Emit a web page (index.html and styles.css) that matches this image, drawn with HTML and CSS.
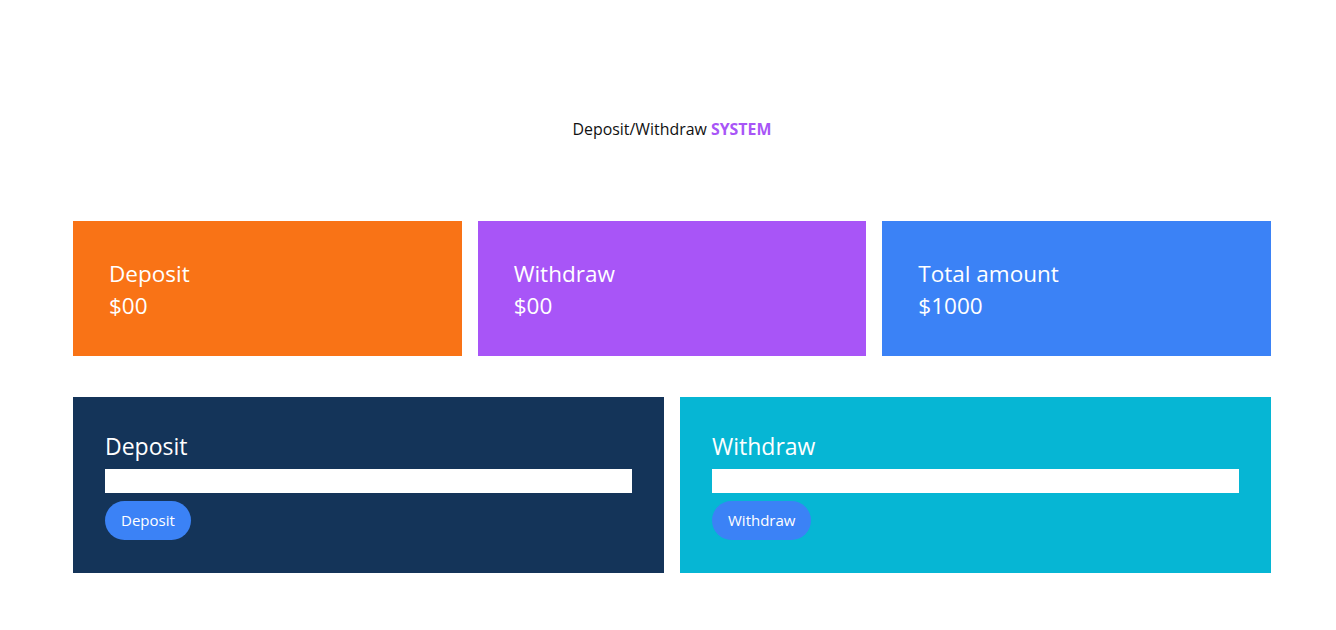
FILE: index.html
```html
<!DOCTYPE html>
<html>
<head>
<meta charset="utf-8">
<link rel="stylesheet" href="styles.css">
</head>
<body>
<div class="page">
  <h1 class="title">Deposit/Withdraw <span class="accent">SYSTEM</span></h1>
  <div class="stats">
    <div class="stat stat-orange">
      <div class="stat-label">Deposit</div>
      <div class="stat-value">$00</div>
    </div>
    <div class="stat stat-purple">
      <div class="stat-label">Withdraw</div>
      <div class="stat-value">$00</div>
    </div>
    <div class="stat stat-blue">
      <div class="stat-label">Total amount</div>
      <div class="stat-value">$1000</div>
    </div>
  </div>
  <div class="forms">
    <div class="panel panel-navy">
      <h2 class="panel-title">Deposit</h2>
      <input class="panel-input" type="text">
      <button class="btn">Deposit</button>
    </div>
    <div class="panel panel-cyan">
      <h2 class="panel-title">Withdraw</h2>
      <input class="panel-input" type="text">
      <button class="btn">Withdraw</button>
    </div>
  </div>
</div>
</body>
</html>
```
FILE: styles.css
```css
* { box-sizing: border-box; }
body {
  margin: 0;
  background: #fff;
  font-family: "Open Sans", "Noto Sans", sans-serif;
  color: #111;
}
.page {
  width: 1198px;
  margin-left: 73px;
  padding-top: 117px;
}
.title {
  margin: 0;
  text-align: center;
  font-size: 15.9px;
  font-weight: 400;
  line-height: 24px;
}
.accent {
  color: #a855f7;
  font-weight: 700;
}
.stats {
  margin-top: 80px;
  display: grid;
  grid-template-columns: 1fr 1fr 1fr;
  gap: 16px;
}
.stat {
  height: 135px;
  padding: 37px 36px;
  color: #fff;
  font-size: 22.5px;
  line-height: 32px;
}
.stat-orange { background: #f97316; }
.stat-purple { background: #a855f7; }
.stat-blue { background: #3b82f6; }
.forms {
  margin-top: 41px;
  display: grid;
  grid-template-columns: 1fr 1fr;
  gap: 16px;
}
.panel {
  height: 176px;
  padding: 33px 32px;
  color: #fff;
  display: flex;
  flex-direction: column;
  align-items: flex-start;
}
.panel-navy { background: #143459; }
.panel-cyan { background: #06b6d4; }
.panel-title {
  margin: 0;
  font-size: 23px;
  font-weight: 400;
  line-height: 33px;
}
.panel-input {
  margin-top: 6px;
  width: 100%;
  height: 24px;
  border: none;
  background: #fff;
  outline: none;
}
.btn {
  margin-top: 8px;
  height: 40px;
  padding: 0 16px;
  border: none;
  border-radius: 20px;
  background: #3b82f6;
  color: #fff;
  font-family: inherit;
  font-size: 15px;
}
```
